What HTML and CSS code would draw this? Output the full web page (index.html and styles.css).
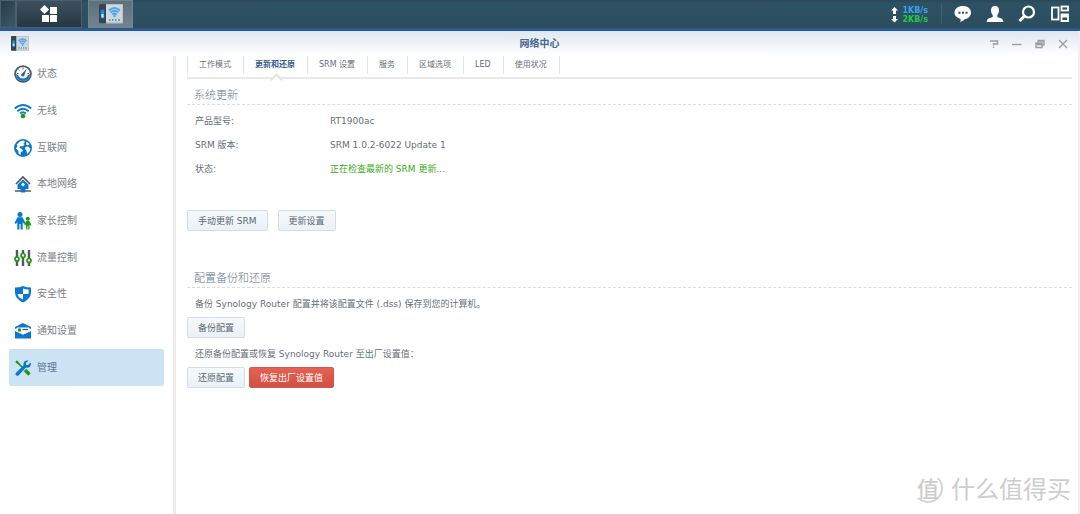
FILE: index.html
```html
<!DOCTYPE html>
<html lang="zh-CN">
<head>
<meta charset="utf-8">
<title>网络中心</title>
<link rel="stylesheet" href="styles.css">
</head>
<body>
<svg class="defs" aria-hidden="true">
  <symbol id="router" viewBox="0 0 24 20">
    <rect x="0" y="0" width="24" height="19.500" rx="1" fill="#b9c2c8"/>
    <rect x="7" y="1" width="16" height="17" fill="#d0d6da"/>
    <path d="M0 1Q0 0 1 0H7V19.500H1Q0 19.500 0 18.500Z" fill="#39434b"/>
    <rect x="1.800" y="5.500" width="3.400" height="9" rx="1.500" fill="#1490f0"/>
    <rect x="2.300" y="10" width="2.400" height="3.500" fill="#9eeaff"/>
    <path d="M10 6.500Q15.500 1.500 21 6.500M11.500 8.500Q15.500 5 19.500 8.500M13.300 10.500Q15.500 8.500 17.700 10.500" fill="none" stroke="#4ba6ee" stroke-width="1.800"/>
    <circle cx="15.500" cy="12" r="1.200" fill="#4ba6ee"/>
    <path d="M10 16H18" stroke="#35a8d8" stroke-width="2" stroke-dasharray="1.500 1.500"/>
    <path d="M19 16H21" stroke="#8a969d" stroke-width="2"/>
  </symbol>
</svg>
<header class="taskbar">
  <button class="task task-edge" aria-label="显示桌面"></button>
  <button class="task task-menu" aria-label="主菜单">
    <svg width="18" height="18" viewBox="0 0 18 18" fill="#fff"><path d="M4.500 0L9 4.500L4.500 9L0 4.500Z"/><rect x="10" y="2" width="7" height="7" rx=".5"/><rect x="2" y="10" width="7" height="7" rx=".5"/><rect x="10" y="10" width="7" height="7" rx=".5"/></svg>
  </button>
  <button class="task task-app" aria-label="网络中心"><svg width="24" height="20"><use href="#router"/></svg></button>
  <div class="speed">
    <svg width="7" height="18" viewBox="0 0 7 18" fill="#fff"><path d="M3.500 1L7 4.500H5V8H2V4.500H0ZM2 10H5V13H7L3.500 16.500L0 13H2Z"/></svg>
    <div><div class="up">1KB/s</div><div class="down">2KB/s</div></div>
  </div>
  <div class="tray">
    <button aria-label="通知"><svg width="18" height="18" viewBox="0 0 18 18"><path d="M9 1C13.500 1 17 3.600 17 7.500S13.500 14 11 14Q9.500 16 6 17Q7 15.500 6.500 13.800C3 13 .5 10.800 .5 7.500C.5 3.600 4.500 1 9 1Z" fill="#fff"/><path d="M4.500 6.700h2v2h-2zM8 6.700h2v2H8zM11.500 6.700h2v2h-2z" fill="#2d4e60"/></svg></button>
    <button aria-label="用户"><svg width="18" height="18" viewBox="0 0 18 18" fill="#fff"><path d="M9 1C12 1 13 3 13 5.500C13 8 12 9 11.300 10V12L15.500 13.500Q17 14.200 17.500 17H.5Q1 14.200 2.500 13.500L6.700 12V10C6 9 5 8 5 5.500C5 3 6 1 9 1Z"/></svg></button>
    <button aria-label="搜索"><svg width="18" height="18" viewBox="0 0 18 18" fill="none" stroke="#fff"><circle cx="10.500" cy="7" r="5.500" stroke-width="2.200"/><path d="M6.500 11L1.500 16" stroke-width="3"/></svg></button>
    <button aria-label="小组件"><svg width="20" height="18" viewBox="0 0 20 18" fill="none" stroke="#fff" stroke-width="1.800"><rect x="2" y="2.500" width="6.500" height="12"/><rect x="11.500" y="1.500" width="6.500" height="4"/><path d="M11.500 9.500h6.500v6.500h-6.500zM11.500 11.500h6.500"/></svg></button>
  </div>
</header>
<div class="window">
  <div class="titlebar">
    <svg width="18" height="15"><use href="#router"/></svg>
    <h1>网络中心</h1>
    <div class="controls">
      <button aria-label="帮助"><svg viewBox="0 0 10 10"><path d="M1 2H8.500V5H4.500V6.500M4.500 7.800V9"/></svg></button>
      <button aria-label="最小化"><svg viewBox="0 0 10 10"><path d="M0 5.500H9.500"/></svg></button>
      <button aria-label="还原窗口"><svg viewBox="0 0 10 10"><path d="M3 3V1.500H9V6H7.500M1 4H7V8.500H1ZM1 5.500H7M3 2H9"/></svg></button>
      <button aria-label="关闭"><svg viewBox="0 0 10 10"><path d="M1 1L9 9M9 1L1 9"/></svg></button>
    </div>
  </div>
  <div class="body">
    <nav class="side">
      <div class="menu">
      <a href="#"><svg viewBox="0 0 18 18"><circle cx="9" cy="9" r="7.900" fill="#fff" stroke="#4d5b66" stroke-width="1.800"/><path d="M2 9A7 7 0 0 0 16 9L14 10Q12.500 13.500 9 13.500T4 10Z" fill="#0b78cf"/><path d="M9 2.500V4.500M4.500 4.500L5.500 5.500M3 8.500H4.500M13.500 8.500H15" stroke="#4d5b66"/><path d="M12.500 4L10.500 9.800A1.700 1.700 0 1 1 8.300 8.200Z" fill="#4d5b66"/></svg>状态</a>
      <a href="#"><svg viewBox="0 0 18 18" fill="none" stroke="#0b78cf" stroke-width="1.900"><path d="M.8 6.500Q9-.5 17.200 6.500M3.300 9.200Q9 4.300 14.700 9.200M6 11.500Q9 9 12 11.500"/><circle cx="9" cy="14" r="2.300" fill="#22980f" stroke="none"/></svg>无线</a>
      <a href="#"><svg viewBox="0 0 18 18"><circle cx="9" cy="9" r="9" fill="#0b78cf"/><path d="M6 2.200L9.500 1.500L11 3L9.500 4.500L10.500 6L8 7.500L6.500 7L5.500 9L8 10L9 12L7 13L6.500 16L4.500 14.500L4.300 11.500L2 9.500L3.500 7L2.800 5.500ZM12.500 2.500L15.500 5L14 6.500L12 5.500ZM11.500 8L14 7.500L16.500 9.500L15.500 12.500L13 15L12.500 11.500L11 10Z" fill="#fff"/></svg>互联网</a>
      <a href="#"><svg viewBox="0 0 18 18"><path d="M2 9L9 2L16 9" fill="none" stroke="#4d5b66" stroke-width="1.700"/><path d="M9 4.500L14.500 9.500V14H3.500V9.500Z" fill="#0b78cf"/><path d="M9 7.500L11 9.500L9 11.500L7 9.500Z" fill="#fff"/><path d="M1 16H17" stroke="#4d5b66" stroke-width="1.500"/><rect x="6.500" y="13.500" width="5" height="4" rx="1" fill="#0b78cf"/></svg>本地网络</a>
      <a href="#"><svg viewBox="0 0 18 18"><g fill="#0b78cf"><circle cx="6" cy="2.600" r="2.500"/><path d="M3.500 5.200H8.500L11.500 11L10 12L8.700 10V17.500H6.600V12H5.400V17.500H3.300V10L2 12L.5 11Z"/></g><g fill="#22980f"><circle cx="13.800" cy="6.800" r="2"/><path d="M12.200 9H15.400L17.500 13L16.500 13.700L15.500 12.500V17.500H14.200V14H13.400V17.500H12.100V12.500L11 13.500L10.300 12.500Z"/></g></svg>家长控制</a>
      <a href="#"><svg viewBox="0 0 18 18"><path d="M3 1V17M9 1V17M15 1V17" stroke="#4d5b66" stroke-width="2.400"/><g fill="#fff" stroke="#22980f" stroke-width="1.700"><circle cx="3" cy="10" r="2"/><circle cx="9" cy="6.500" r="2"/><circle cx="15" cy="11.500" r="2"/></g></svg>流量控制</a>
      <a href="#"><svg viewBox="0 0 18 18"><path d="M1 2.500Q5.500 2.500 9 1Q12.500 2.500 17 2.500V8Q16.500 14 9 17.500Q1.500 14 1 8Z" fill="#0b78cf"/><path d="M9 3.500V9H14.500Q14.800 7 14.600 4.600Q11.500 4.500 9 3.500ZM3.500 9H9V14.500Q4 12.500 3.500 9Z" fill="#fff"/></svg>安全性</a>
      <a href="#"><svg viewBox="0 0 18 18"><path d="M1 5L9 1L17 5V16.500H1Z" fill="#0b78cf"/><path d="M3 5.500H15V10L9 12.800L3 10ZM1 7L3 6V10L1 9ZM17 7L15 6V10L17 9Z" fill="#fff"/><rect x="4" y="6.500" width="3" height="3" fill="#22980f"/><path d="M8.500 7.500H14" stroke="#4d5b66" stroke-width="1.300"/></svg>通知设置</a>
      <a href="#" class="on" aria-current="page"><svg viewBox="0 0 18 18"><path d="M2 2L9 9" stroke="#22980f" stroke-width="1.700"/><path d="M11 11L15.500 15.500" stroke="#22980f" stroke-width="3.500"/><path d="M1.500 3.500L3.500 1.500L5.500 4.500L4.500 5.500Z" fill="#22980f"/><path d="M14.500 1.500L12 4V6H14L16.700 3.500Q17.500 6 15.800 7.800Q14.500 9 12 8.500L4.500 16.500Q2.500 17.500 1.500 15.500Q1.300 14.500 2 13.800L9.500 6.500Q9 4 10.500 2.500Q12 1 14.500 1.500Z" fill="#0b78cf"/></svg>管理</a>
      </div>
    </nav>
    <main class="main">
      <nav class="tabs">
        <a href="#">工作模式</a><a href="#" class="on" aria-current="page">更新和还原</a><a href="#">SRM 设置</a><a href="#">服务</a><a href="#">区域选项</a><a href="#">LED</a><a href="#">使用状况</a>
      </nav>
      <section class="update">
        <h2>系统更新</h2>
        <dl>
          <dt>产品型号:</dt><dd>RT1900ac</dd>
          <dt>SRM 版本:</dt><dd>SRM 1.0.2-6022 Update 1</dd>
          <dt>状态:</dt><dd class="ok">正在检查最新的 SRM 更新...</dd>
        </dl>
        <div class="actions wide"><button class="btn">手动更新 SRM</button><button class="btn">更新设置</button></div>
      </section>
      <section class="backup">
        <h2>配置备份和还原</h2>
        <p>备份 Synology Router 配置并将该配置文件 (.dss) 保存到您的计算机。</p>
        <div class="actions"><button class="btn">备份配置</button></div>
        <p>还原备份配置或恢复 Synology Router 至出厂设置值：</p>
        <div class="actions"><button class="btn">还原配置</button><button class="btn danger">恢复出厂设置值</button></div>
      </section>
    </main>
  </div>
</div>
<div class="watermark"><span class="seal">值</span><span>什么值得买</span></div>
</body>
</html>
```
FILE: styles.css
```css
* { box-sizing: border-box; }
body {
  margin: 0;
  min-height: 100vh;
  display: flex;
  flex-direction: column;
  background: #fff;
  color: #666f78;
  font: 9px/24px "DejaVu Sans", "Noto Sans CJK SC", sans-serif;
}
h1, h2, p, dl, dd { margin: 0; }
a { color: inherit; text-decoration: none; }
button { font: inherit; color: inherit; padding: 0; border: 0; background: none; }
svg { display: block; flex: none; }
.defs { position: absolute; width: 0; height: 0; }

.taskbar {
  display: flex;
  align-items: center;
  height: 31px;
  padding-right: 10px;
  border-bottom: 3px solid #2a5a94;
  background: linear-gradient(#2b4656, #2d5264 12%, #2c4d5e);
}
.task {
  display: flex;
  align-items: center;
  justify-content: center;
  height: 28px;
  border: 1px solid #49606e;
}
.task-edge { width: 16px; background: linear-gradient(135deg, #263c4a, #3f5867); }
.task-menu { width: 66px; background: linear-gradient(#3e505e, #263743); }
.task-app { width: 45px; margin-left: 6px; background: linear-gradient(#5b717e, #72848e); border-color: #71858f; }
.speed {
  display: flex;
  align-items: center;
  gap: 4px;
  height: 20px;
  margin-left: auto;
  padding-top: 2px;
  padding-right: 13px;
  border-right: 1px solid #45616f;
  font-size: 8px;
  font-weight: bold;
  line-height: 9px;
}
.up { color: #3ba2e8; }
.down { color: #22c84a; }
.tray { display: flex; gap: 14px; margin-left: 12px; }

.window {
  flex: 1;
  display: flex;
  flex-direction: column;
  border-right: 2px solid #f0f0f0;
}
.titlebar {
  display: grid;
  grid-template-columns: 1fr auto 1fr;
  align-items: center;
  height: 25px;
  padding: 0 10px 0 11px;
  background: linear-gradient(#e0e7f0, #fff);
}
h1 { font-size: 10px; color: #46658f; }
.controls { display: flex; justify-content: flex-end; gap: 13px; }
.controls svg { width: 10px; height: 10px; fill: none; stroke: #989fa7; stroke-width: 1.4; }

.body { flex: 1; display: flex; }
.side {
  width: 176px;
  padding: 0 9px;
  border-right: 3px solid #ececec;
  font-size: 10px;
  color: #7a8187;
}
.menu {
  display: grid;
  grid-auto-rows: 1fr;
  min-height: 330px;
}
.side a {
  display: flex;
  align-items: center;
  gap: 5px;
  padding-left: 5px;
  border-radius: 2px;
}
.side svg { width: 18px; height: 18px; }
.side .on { background: #cce3f6; color: #587394; }

.main { flex: 1; padding: 0 6px 0 11px; }
.tabs {
  display: flex;
  height: 23px;
  border-bottom: 2px solid #e8e8e8;
  font-size: 8px;
  line-height: 18px;
}
.tabs a { position: relative; height: 18px; padding: 0 12px 0 11px; border-left: 1px solid #dde7ee; }
.tabs a:last-child { border-right: 1px solid #dde7ee; }
.tabs .on { font-weight: bold; color: #34598c; }
.tabs .on::after {
  content: "";
  position: absolute;
  left: 50%;
  top: 19px;
  width: 7px;
  height: 7px;
  margin-left: -4px;
  border: solid #e4e4e4;
  border-width: 2px 0 0 2px;
  background: #fff;
  transform: rotate(45deg);
}
h2 {
  height: 20px;
  padding-left: 7px;
  border-bottom: 1px dashed #d9dde0;
  font-size: 11px;
  font-weight: 300;
  line-height: 22px;
  color: #64788f;
}
.update { padding-top: 6px; }
dl { display: grid; grid-template-columns: 135px 1fr; padding: 4px 8px 0; }
.ok { color: #3cab20; }
.actions { display: flex; gap: 4px; }
.wide { gap: 10px; margin-top: 29px; }
.btn {
  height: 21px;
  padding: 0 10px;
  border: 1px solid #d2dde8;
  border-radius: 2px;
  background: linear-gradient(#f5f9fc, #eaf1f7);
  line-height: 18px;
  color: #5c6670;
}
.danger { border-color: #d5584c; background: linear-gradient(#e36254, #d25043); color: #fff; }
.backup { padding-top: 37px; }
.backup p { padding: 4px 8px 1px; }

.watermark {
  position: absolute;
  right: 9px;
  bottom: 10px;
  display: flex;
  align-items: center;
  gap: 8px;
  font: 24px/32px "Noto Sans CJK SC", sans-serif;
  color: #cdcdcd;
}
.seal {
  width: 30px;
  height: 30px;
  border: 2px solid #d4d4d4;
  border-left-color: transparent;
  border-top-color: transparent;
  border-radius: 50%;
  font-size: 22px;
  font-weight: 500;
  line-height: 25px;
  text-align: center;
}
```
